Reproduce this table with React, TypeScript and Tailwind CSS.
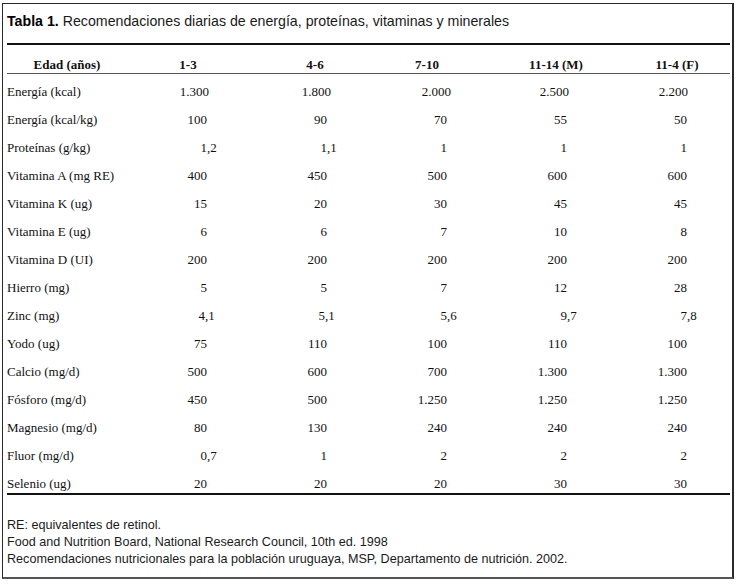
import React from "react";

type Row = { label: string; vals: string[]; shift?: string[] };

const rows: Row[] = [
  { label: "Energía (kcal)", vals: ["1.300", "1.800", "2.000", "2.500", "2.200"], shift: ["translate-x-[2px]", "translate-x-[4px]", "translate-x-[4px]", "translate-x-[2px]", "translate-x-[1px]"] },
  { label: "Energía (kcal/kg)", vals: ["100", "90", "70", "55", "50"] },
  { label: "Proteínas (g/kg)", vals: ["1,2", "1,1", "1", "1", "1"] },
  { label: "Vitamina A (mg RE)", vals: ["400", "450", "500", "600", "600"] },
  { label: "Vitamina K (ug)", vals: ["15", "20", "30", "45", "45"] },
  { label: "Vitamina E (ug)", vals: ["6", "6", "7", "10", "8"] },
  { label: "Vitamina D (UI)", vals: ["200", "200", "200", "200", "200"] },
  { label: "Hierro (mg)", vals: ["5", "5", "7", "12", "28"] },
  { label: "Zinc (mg)", vals: ["4,1", "5,1", "5,6", "9,7", "7,8"], shift: ["-translate-x-[2px]", "-translate-x-[2px]", "", "", ""] },
  { label: "Yodo (ug)", vals: ["75", "110", "100", "110", "100"] },
  { label: "Calcio (mg/d)", vals: ["500", "600", "700", "1.300", "1.300"] },
  { label: "Fósforo (mg/d)", vals: ["450", "500", "1.250", "1.250", "1.250"] },
  { label: "Magnesio (mg/d)", vals: ["80", "130", "240", "240", "240"] },
  { label: "Fluor (mg/d)", vals: ["0,7", "1", "2", "2", "2"] },
  { label: "Selenio (ug)", vals: ["20", "20", "20", "30", "30"] },
];

function Val({ v, last, shift }: { v: string; last: boolean; shift?: string }) {
  const idx = v.indexOf(",");
  const int = idx >= 0 ? v.slice(0, idx) : v;
  const frac = idx >= 0 ? v.slice(idx) : "";
  return (
    <div className={`flex ${shift ?? ""}`}>
      <span className="w-[60px] text-right">{int}</span>
      <span className={last ? "w-[43px] text-left" : "w-[60px] text-left"}>{frac}</span>
    </div>
  );
}

export default function App() {
  return (
    <div className="w-[740px] h-[584px] bg-white overflow-hidden">
      <div className="ml-[2px] mt-[3px] w-[732px] h-[576px] border border-[#2a2a2a] border-r-2 border-b-2 border-b-[#555] pl-[4px] pr-[2px] pt-[7px] flex flex-col">
        <div className="text-[14.2px] leading-[20px] text-[#1a1a1a] whitespace-nowrap" style={{ fontFamily: '"Liberation Sans", Arial, sans-serif' }}>
          <span className="font-bold text-black">Tabla 1.</span> Recomendaciones diarias de energía, proteínas, vitaminas y minerales
        </div>
        <div className="mt-[12px] h-[2px] bg-[#111]" />
        <div className="text-[13px] leading-[16px] text-[#111]" style={{ fontFamily: '"Liberation Serif", "Times New Roman", serif' }}>
          <div className="flex h-[28px] pt-[12px] font-bold whitespace-nowrap">
            <div className="w-[120px] text-center">Edad (años)</div>
            <div className="w-[122px] text-center">1-3</div>
            <div className="w-[132px] text-center">4-6</div>
            <div className="w-[92px] text-center">7-10</div>
            <div className="w-[166px] text-center">11-14 (M)</div>
            <div className="w-[76px] text-center">11-4 (F)</div>
          </div>
          <div className="h-px bg-[#555]" />
          {rows.map((r, i) => (
            <div key={r.label} className={`flex ${i === rows.length - 1 ? "h-[27px]" : "h-[28px]"} pt-[10px] whitespace-nowrap`}>
              <div className="w-[140px]">{r.label}</div>
              {r.vals.map((v, j) => (
                <Val key={j} v={v} last={j === 4} shift={r.shift?.[j]} />
              ))}
            </div>
          ))}
          <div className="h-[2px] bg-[#111]" />
        </div>
        <div className="mt-[22px] text-[12.6px] leading-[17px] text-[#1a1a1a]" style={{ fontFamily: '"Liberation Sans", Arial, sans-serif' }}>
          <div>RE: equivalentes de retinol.</div>
          <div>Food and Nutrition Board, National Research Council, 10th ed. 1998</div>
          <div>Recomendaciones nutricionales para la población uruguaya, MSP, Departamento de nutrición. 2002.</div>
        </div>
      </div>
    </div>
  );
}
